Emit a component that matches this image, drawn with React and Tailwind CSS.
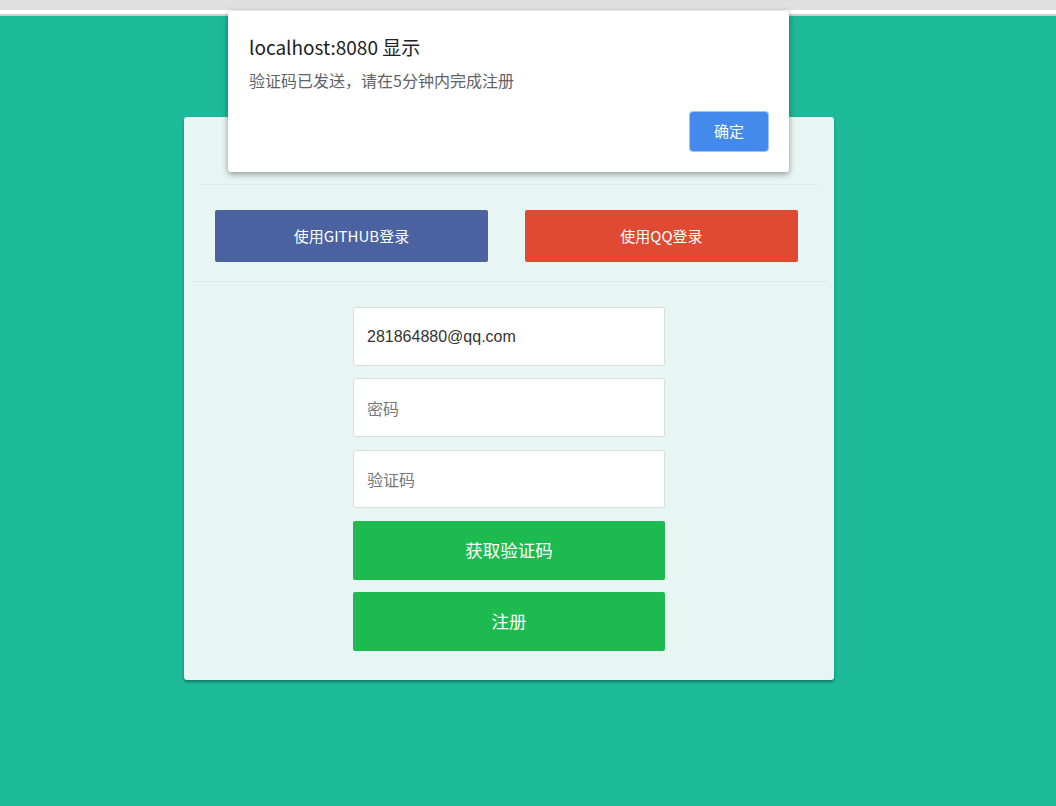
import React from "react";

export default function App() {
  const font = { fontFamily: '"Noto Sans CJK SC", "Noto Sans", sans-serif' };
  return (
    <div className="relative w-[1056px] h-[806px] overflow-hidden flex flex-col bg-[#1dba9a]" style={font}>
      <div className="h-[10px] bg-[#e0e0e0] shrink-0" />
      <div className="h-[4px] bg-white shrink-0" />
      <div className="h-[2px] bg-[#cfcfcf] shrink-0" />
      <div className="flex-1 bg-[#1dba9a]">
        <div className="ml-[184px] mt-[101px] w-[650px] h-[563px] rounded-[3px] bg-[#e8f6f3] shadow-[0_2px_3px_rgba(0,0,0,0.35)] flex flex-col">
          <div className="h-[67px] shrink-0" />
          <div className="mx-[16px] h-px bg-[#dde9e6]" />
          <div className="flex justify-between pl-[31px] pr-[36px] pt-[25px]">
            <button className="w-[273px] h-[52px] rounded-[2px] bg-[#4a63a0] text-white text-[15px]">使用GITHUB登录</button>
            <button className="w-[273px] h-[52px] rounded-[2px] bg-[#e04a33] text-white text-[15px]">使用QQ登录</button>
          </div>
          <div className="ml-[9px] mr-[8px] mt-[19px] h-px bg-[#dde9e6]" />
          <div className="flex flex-col items-center pt-[25px]">
            <div className="w-[312px] flex flex-col">
              <div className="h-[59px] bg-white border border-[#dcdcdc] rounded-[2px] flex items-center pl-[13px] text-[16px] text-[#333]" style={{ fontFamily: '"Liberation Sans", Arial, sans-serif' }}>
                281864880@qq.com
              </div>
              <div className="mt-[12px] h-[59px] bg-white border border-[#dcdcdc] rounded-[2px] flex items-center pl-[13px] text-[16px] text-[#777]">密码</div>
              <div className="mt-[13px] h-[58px] bg-white border border-[#dcdcdc] rounded-[2px] flex items-center pl-[13px] text-[16px] text-[#777]">验证码</div>
              <button className="mt-[13px] h-[59px] bg-[#1dba50] rounded-[2px] text-white text-[17.5px]">获取验证码</button>
              <button className="mt-[12px] h-[59px] bg-[#1dba50] rounded-[2px] text-white text-[17.5px]">注册</button>
            </div>
          </div>
        </div>
      </div>

      <div className="absolute left-[228px] top-[11px] w-[561px] h-[161px] bg-white rounded-[3px] shadow-[0_2px_6px_rgba(0,0,0,0.4)] flex flex-col pl-[21px] pr-[20px]">
        <div className="pt-[23px] text-[19px] leading-[26px] text-[#202124]">localhost:8080 显示</div>
        <div className="mt-[9px] text-[16px] leading-[22px] text-[#5f6368]">验证码已发送，请在5分钟内完成注册</div>
        <div className="flex justify-end mt-[20px]">
          <button className="w-[80px] h-[41px] rounded-[4px] bg-[#448aec] border border-[#9fc3f6] text-white text-[15px]">确定</button>
        </div>
      </div>
    </div>
  );
}
